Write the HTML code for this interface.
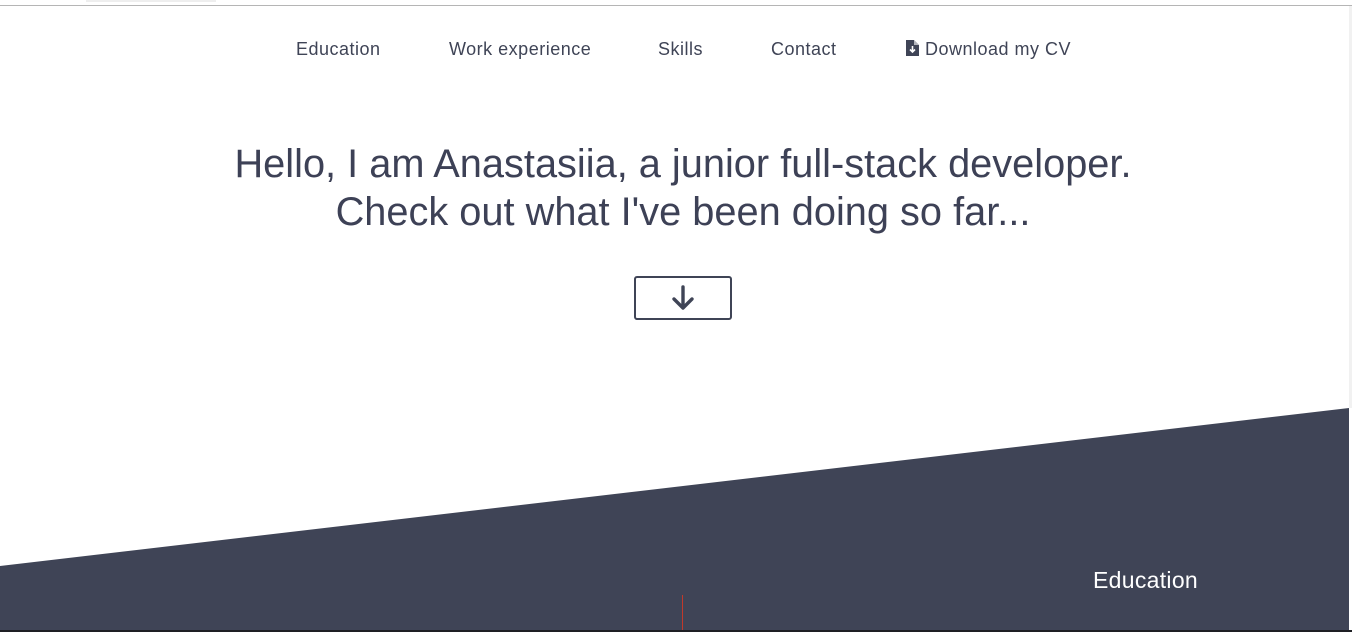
<!DOCTYPE html>
<html><head><style>
body{margin:0;width:1352px;height:632px;overflow:hidden;background:#fff;font-family:"Liberation Sans",sans-serif;color:#3f4456;position:relative}
.top{position:absolute;left:0;top:5px;width:1352px;height:1px;background:#b5b5b5}
.tab{position:absolute;left:86px;top:0;width:130px;height:2px;background:#eee}
.sb{position:absolute;left:1349px;top:6px;width:3px;height:626px;background:#f1f1f1}
.nav{position:absolute;top:39px;font-size:18px;letter-spacing:0.5px;white-space:nowrap}
h1{position:absolute;left:0;width:1366px;top:140px;margin:0;text-align:center;font-weight:normal;font-size:39.75px;line-height:48px;color:#3d4156}
.btn{position:absolute;left:634px;top:276px;width:94px;height:40px;border:2px solid #3f4456;border-radius:3px}
.edu{position:absolute;left:1093px;top:567px;color:#fff;font-size:23px;letter-spacing:0.3px}
.red{position:absolute;left:682px;top:595px;width:1px;height:37px;background:#c0392b}
.bot{position:absolute;left:0;top:630px;width:1352px;height:2px;background:#1e1f24}
</style></head><body>
<div class="top"></div><div class="tab"></div>
<div class="nav" style="left:296px">Education</div>
<div class="nav" style="left:449px">Work experience</div>
<div class="nav" style="left:658px">Skills</div>
<div class="nav" style="left:771px">Contact</div>
<div class="nav" style="left:905px"><svg width="15" height="18" viewBox="0 0 15 18" style="vertical-align:-2px;margin-right:5px"><path d="M1 1h8l5 5v11H1z" fill="#3f4456"/><path d="M9 1v5h5" fill="#fff" opacity=".6"/><path d="M7.5 7v6M5 10.5l2.5 2.5 2.5-2.5" stroke="#fff" stroke-width="1.6" fill="none"/></svg>Download my CV</div>
<h1>Hello, I am Anastasiia, a junior full-stack developer.<br>Check out what I've been doing so far...</h1>
<div class="btn"><svg width="94" height="40" viewBox="0 0 94 40"><path d="M47 9v20M38 21l9 9 9-9" stroke="#3f4456" stroke-width="3.4" stroke-linecap="round" stroke-linejoin="round" fill="none"/></svg></div>
<svg style="position:absolute;left:0;top:0" width="1352" height="632"><polygon points="0,566 1349,408 1349,632 0,632" fill="#3f4456"/></svg>
<div class="sb" style="height:402px"></div>
<div class="edu">Education</div>
<div class="red"></div>
<div class="bot"></div>
</body></html>
